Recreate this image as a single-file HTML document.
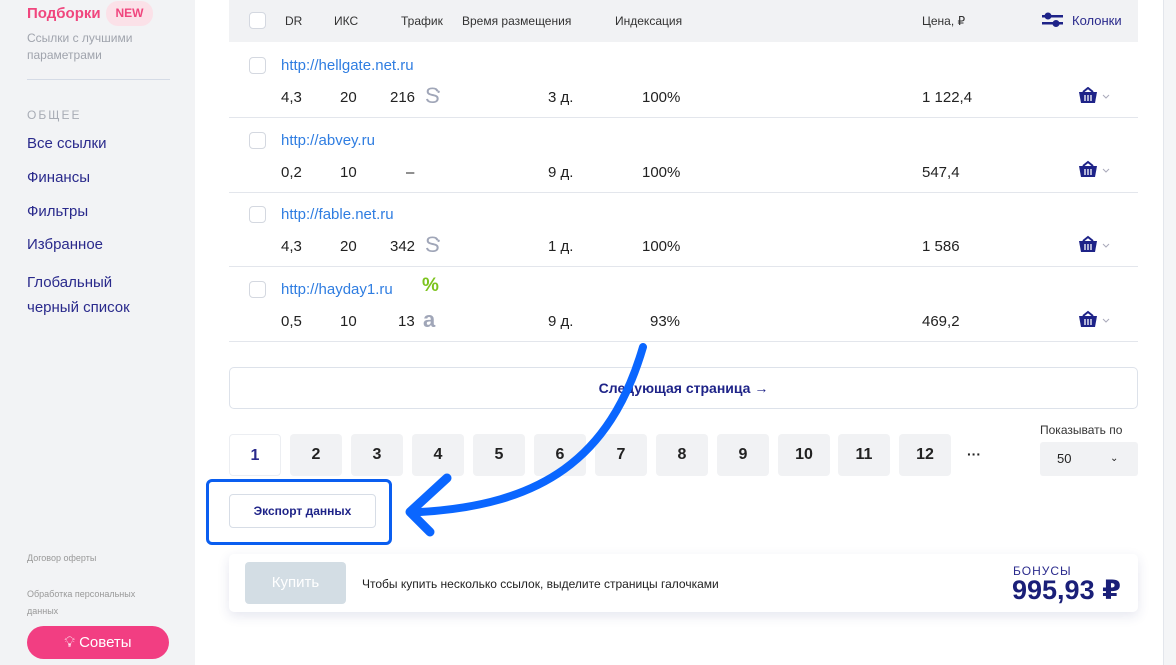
<!DOCTYPE html>
<html><head><meta charset="utf-8"><style>
*{box-sizing:border-box;margin:0;padding:0}
body{width:1176px;height:665px;overflow:hidden;background:#fff;font-family:"Liberation Sans","DejaVu Sans",sans-serif;position:relative;color:#222}
.sb{position:absolute;left:0;top:0;width:195px;height:665px;background:#f2f3f5}
.abs{position:absolute}
.nav{position:absolute;left:27px;font-size:15px;color:#2a2a8c}
.hdr{position:absolute;left:229px;top:0;width:909px;height:42px;background:#f1f2f4;font-size:12px;color:#333}
.cb{position:absolute;width:17px;height:17px;border:1px solid #d4d8e0;border-radius:4px;background:#fff}
.row{position:absolute;left:229px;width:909px;height:75px;border-bottom:1px solid #e3e6ec}
.row .u{position:absolute;left:52px;top:14px;font-size:15px;color:#2f7de1}
.row .v{position:absolute;top:46px;font-size:15px;color:#222;line-height:18px}
.ic{position:absolute;top:40px;color:#a0a6b8;font-size:22px;line-height:26px}
.pg{position:absolute;top:434px;width:52px;height:42px;background:#f1f2f4;border-radius:4px;font-weight:bold;font-size:16px;text-align:center;line-height:42px;color:#222}
</style></head><body>
<div class="sb"></div>
<div class="abs" style="left:27px;top:5px;font-size:15px;font-weight:bold;color:#f0467e">Подборки</div>
<div class="abs" style="left:106px;top:1px;width:47px;height:25px;border-radius:12px;background:#fbe1e8;color:#f0467e;font-size:12px;font-weight:bold;text-align:center;line-height:25px">NEW</div>
<div class="abs" style="left:27px;top:30px;font-size:12px;color:#a0a4ad;line-height:17px">Ссылки с лучшими<br>параметрами</div>
<div class="abs" style="left:27px;top:79px;width:143px;height:1px;background:#d5dbe6"></div>
<div class="abs" style="left:27px;top:108px;font-size:12px;color:#a8acb5;letter-spacing:2px">ОБЩЕЕ</div>
<div class="nav" style="top:135px">Все ссылки</div>
<div class="nav" style="top:169px">Финансы</div>
<div class="nav" style="top:203px">Фильтры</div>
<div class="nav" style="top:236px">Избранное</div>
<div class="nav" style="top:270px;line-height:25px">Глобальный<br>черный список</div>
<div class="abs" style="left:27px;top:553px;font-size:9px;color:#999">Договор оферты</div>
<div class="abs" style="left:27px;top:586px;font-size:9px;color:#999;line-height:17px">Обработка персональных<br>данных</div>
<div class="abs" style="left:27px;top:626px;width:142px;height:33px;border-radius:17px;background:#f23e82;color:#fff;font-size:15px;text-align:center;line-height:33px">💡︎ Советы</div>
<div class="abs" style="left:1163px;top:0;width:13px;height:665px;background:#f4f5f7;border-left:1px solid #e3e6ec"></div>

<div class="hdr">
<div class="cb" style="left:20px;top:12px"></div>
<span class="abs" style="left:56px;top:14px">DR</span>
<span class="abs" style="left:105px;top:14px">ИКС</span>
<span class="abs" style="left:172px;top:14px">Трафик</span>
<span class="abs" style="left:233px;top:14px">Время размещения</span>
<span class="abs" style="left:386px;top:14px">Индексация</span>
<span class="abs" style="left:693px;top:14px">Цена, ₽</span>
<svg class="abs" style="left:812px;top:11px" width="24" height="18" viewBox="0 0 24 18"><rect x="1" y="4" width="21" height="2.5" fill="#1e2388"/><rect x="1" y="11" width="21" height="2.5" fill="#1e2388"/><circle cx="7" cy="5" r="3.5" fill="#1e2388"/><circle cx="15" cy="12.5" r="3.5" fill="#1e2388"/></svg>
<span class="abs" style="left:843px;top:13px;color:#2a2a8c;font-size:13px">Колонки</span>
</div>

<div class="row" style="top:43px"><div class="cb" style="left:20px;top:14px"></div><span class="u">http://hellgate.net.ru</span>
<span class="v" style="left:52px">4,3</span><span class="v" style="left:111px">20</span><span class="v" style="left:161px">216</span><span class="ic" style="left:196px">S</span><span class="ic" style="left:208px;top:36px;font-size:9px">•</span><span class="v" style="left:319px">3 д.</span><span class="v" style="left:413px">100%</span><span class="v" style="left:693px">1 122,4</span></div>
<div class="row" style="top:118px"><div class="cb" style="left:20px;top:14px"></div><span class="u">http://abvey.ru</span>
<span class="v" style="left:52px">0,2</span><span class="v" style="left:111px">10</span><span class="v" style="left:177px">–</span><span class="v" style="left:319px">9 д.</span><span class="v" style="left:413px">100%</span><span class="v" style="left:693px">547,4</span></div>
<div class="row" style="top:192px"><div class="cb" style="left:20px;top:14px"></div><span class="u">http://fable.net.ru</span>
<span class="v" style="left:52px">4,3</span><span class="v" style="left:111px">20</span><span class="v" style="left:161px">342</span><span class="ic" style="left:196px">S</span><span class="ic" style="left:208px;top:36px;font-size:9px">•</span><span class="v" style="left:319px">1 д.</span><span class="v" style="left:413px">100%</span><span class="v" style="left:693px">1 586</span></div>
<div class="row" style="top:267px"><div class="cb" style="left:20px;top:14px"></div><span class="u">http://hayday1.ru</span>
<span class="abs" style="left:193px;top:8px;color:#7cc31d;font-weight:bold;font-size:19px">%</span>
<span class="v" style="left:52px">0,5</span><span class="v" style="left:111px">10</span><span class="v" style="left:169px">13</span><span class="ic" style="left:194px;font-weight:bold">a</span><span class="v" style="left:319px">9 д.</span><span class="v" style="left:421px">93%</span><span class="v" style="left:693px">469,2</span></div>

<svg class="abs" style="left:1076px;top:87px" width="40" height="265">
<g id="bk"><path d="M3 5h18l-2 11H5z" fill="#1e2388"/><path d="M7 5l5-4 5 4" stroke="#1e2388" stroke-width="2" fill="none"/><path d="M9 8v6M12 8v6M15 8v6" stroke="#fff" stroke-width="1.3"/><path d="M27 8l3 3 3-3" stroke="#aab" fill="none"/></g>
<use href="#bk" y="74"/><use href="#bk" y="149"/><use href="#bk" y="224"/>
</svg>

<div class="abs" style="left:229px;top:367px;width:909px;height:42px;border:1px solid #dde2ea;border-radius:5px;text-align:center;line-height:40px;font-weight:bold;font-size:14px;color:#1e2388">Следующая страница →</div>

<div class="pg" style="left:229px;background:#fff;border:1px solid #eceef2;color:#2a2a8c">1</div>
<div class="pg" style="left:290px">2</div><div class="pg" style="left:351px">3</div><div class="pg" style="left:412px">4</div><div class="pg" style="left:473px">5</div><div class="pg" style="left:534px">6</div><div class="pg" style="left:595px">7</div><div class="pg" style="left:656px">8</div><div class="pg" style="left:717px">9</div><div class="pg" style="left:778px">10</div><div class="pg" style="left:838px">11</div><div class="pg" style="left:899px">12</div>
<div class="abs" style="left:967px;top:446px;font-weight:bold;font-size:14px">···</div>
<div class="abs" style="left:1040px;top:423px;font-size:12px;color:#333">Показывать по</div>
<div class="abs" style="left:1040px;top:442px;width:98px;height:34px;background:#f1f2f4;border-radius:3px;font-size:13px;line-height:34px;padding-left:17px">50<span style="position:absolute;left:70px;font-size:10px">⌄</span></div>

<div class="abs" style="left:229px;top:494px;width:147px;height:34px;border:1px solid #d7dde6;border-radius:4px;text-align:center;line-height:32px;font-weight:bold;font-size:12px;color:#1e2388">Экспорт данных</div>
<div class="abs" style="left:206px;top:479px;width:186px;height:66px;border:3px solid #0a5ef0;border-radius:6px"></div>
<svg class="abs" style="left:0;top:0" width="1176" height="665"><path d="M643 347 C 610 460, 540 505, 420 512" stroke="#0a66ff" stroke-width="8" fill="none" stroke-linecap="round"/><path d="M447 478 L410 512 L430 532" stroke="#0a66ff" stroke-width="9" fill="none" stroke-linecap="round" stroke-linejoin="round"/></svg>

<div class="abs" style="left:229px;top:554px;width:909px;height:58px;background:#fff;border-radius:5px;box-shadow:0 4px 12px rgba(40,50,120,0.12)"></div>
<div class="abs" style="left:245px;top:562px;width:101px;height:42px;background:#d3dde4;border-radius:4px;color:#fff;font-size:15px;text-align:center;line-height:42px">Купить</div>
<div class="abs" style="left:362px;top:577px;font-size:12px;color:#222">Чтобы купить несколько ссылок, выделите страницы галочками</div>
<div class="abs" style="left:1013px;top:564px;font-size:12px;color:#2a2a8c;letter-spacing:1px">БОНУСЫ</div>
<div class="abs" style="left:1012px;top:575px;font-size:27px;font-weight:bold;color:#1a1f78">995,93 ₽</div>
</body></html>
